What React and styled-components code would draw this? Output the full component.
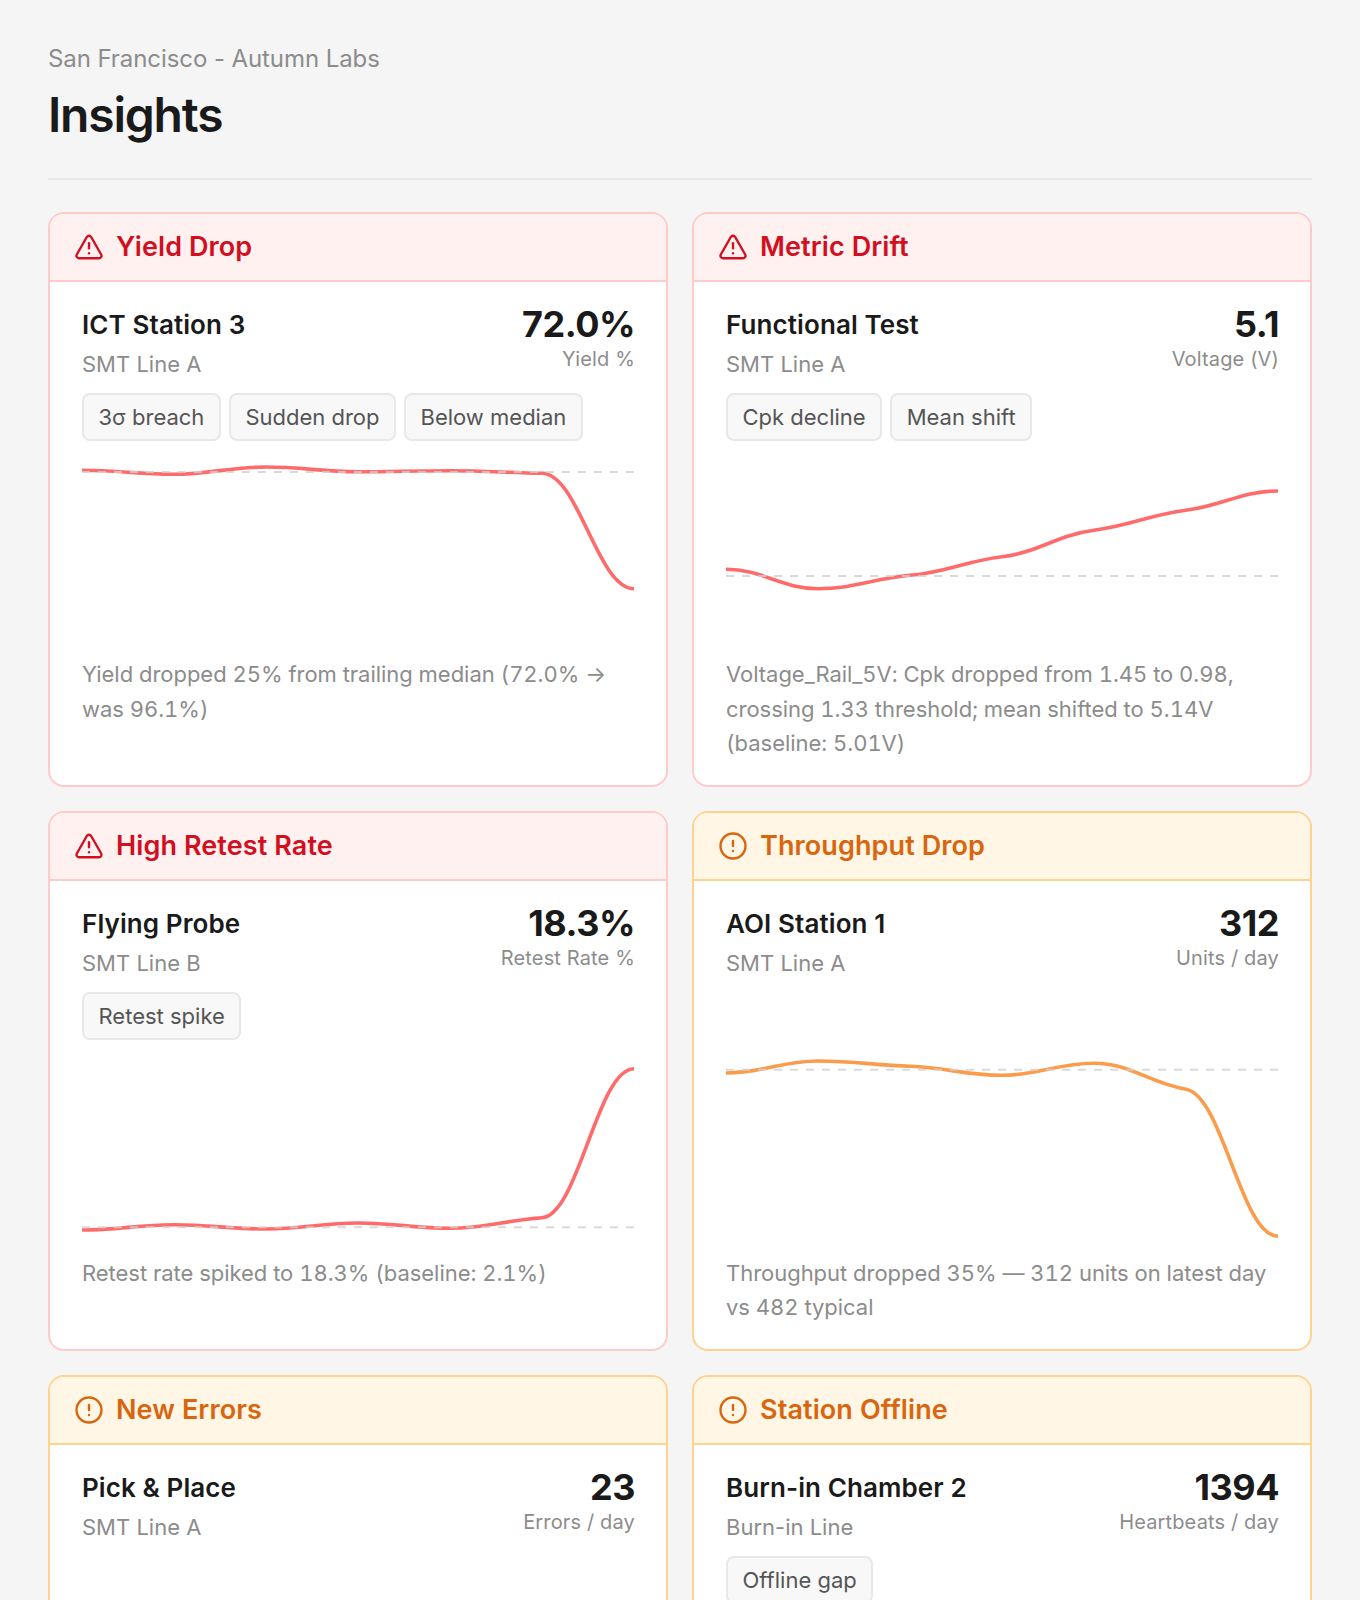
import React from 'react'
import styled, { createGlobalStyle } from 'styled-components'
import { TriangleAlert, CircleAlert } from 'lucide-react'

const GlobalStyle = createGlobalStyle`
  html, body {
    margin: 0;
    padding: 0;
    background: #f5f5f5;
  }
  * {
    box-sizing: border-box;
  }
`

const palette = {
  red: { bg: '#fff1f0', border: '#ffcaca', title: '#d10f1f', line: '#ff6b6b' },
  amber: { bg: '#fff6e5', border: '#ffd28f', title: '#d9660f', line: '#fa9c4b' }
}

const Page = styled.div`
  height: 1600px;
  overflow: hidden;
  padding: 45px 48px 0;
  background: #f5f5f5;
  font-family: Inter, "Liberation Sans", sans-serif;
`

const Header = styled.header`
  border-bottom: 2px solid #e8e8e8;
  padding-bottom: 34px;
  margin-bottom: 32px;
`

const Location = styled.div`
  font-size: 24px;
  line-height: 28px;
  letter-spacing: -0.08px;
  color: #8c8c8c;
`

const Title = styled.h1`
  margin: 13px 0 0;
  font-size: 48px;
  line-height: 58px;
  font-weight: 600;
  letter-spacing: -0.025em;
  color: #1a1a1a;
`

const Grid = styled.div`
  display: grid;
  grid-template-columns: 1fr 1fr;
  gap: 24px;
`

const Card = styled.section`
  display: flex;
  flex-direction: column;
  background: #fff;
  border: 2px solid ${p => palette[p.$tone].border};
  border-radius: 16px;
  overflow: hidden;
`

const CardHead = styled.div`
  display: flex;
  align-items: center;
  gap: 12px;
  height: 68px;
  padding: 0 24px;
  background: ${p => palette[p.$tone].bg};
  border-bottom: 2px solid ${p => palette[p.$tone].border};
  color: ${p => palette[p.$tone].title};
`

const CardTitle = styled.span`
  font-size: 27px;
  font-weight: 600;
  letter-spacing: 0.1px;
  padding-bottom: 1px;
`

const CardBody = styled.div`
  flex: 1;
  padding: 25px 32px 24px;
`

const TopRow = styled.div`
  display: flex;
  justify-content: space-between;
  align-items: flex-start;
`

const Name = styled.div`
  font-size: 26px;
  line-height: 36px;
  font-weight: 600;
  letter-spacing: 0.1px;
  color: #1a1a1a;
`

const Line = styled.div`
  margin-top: 3px;
  font-size: 22px;
  line-height: 36px;
  color: #8c8c8c;
`

const Metric = styled.div`
  margin: -1px -1px 0 0;
  text-align: right;
`

const Value = styled.div`
  font-size: 36px;
  line-height: 36px;
  font-weight: 700;
  letter-spacing: -0.5px;
  color: #1a1a1a;
`

const MetricLabel = styled.div`
  margin-top: 1px;
  font-size: 20px;
  line-height: 32px;
  letter-spacing: 0.15px;
  color: #8c8c8c;
`

const Tags = styled.div`
  display: flex;
  gap: 8px;
  min-height: 48px;
  margin-top: 11px;
`

const Tag = styled.span`
  display: flex;
  align-items: center;
  height: 48px;
  padding: 0 14.5px;
  font-size: 22px;
  color: #555;
  background: #f8f8f8;
  border: 2px solid #e8e8e8;
  border-radius: 8px;
`

const Chart = styled.svg`
  display: block;
  margin: 16px 0 10px;
`

const Note = styled.p`
  margin: 0;
  font-size: 22px;
  line-height: 34.5px;
  font-variant-numeric: tabular-nums;
  letter-spacing: -0.03px;
  color: #8c8c8c;
`

// monotone tangents damped hard, flat at both ends, so knots read almost level
function curvePath(ys, w) {
  const step = w / (ys.length - 1)
  const slopes = ys.slice(1).map((y, i) => (y - ys[i]) / step)
  const t = ys.map((_, i) => {
    if (i === 0 || i === ys.length - 1) return 0
    const a = slopes[i - 1]
    const b = slopes[i]
    if (a * b <= 0) return 0
    return 0.3 * (Math.sign(a) + Math.sign(b)) * Math.min(Math.abs(a), Math.abs(b))
  })
  const pull = step * 0.4
  let d = `M0 ${ys[0]}`
  for (let i = 1; i < ys.length; i++) {
    const x0 = (i - 1) * step
    const x1 = i * step
    d += ` C${x0 + pull} ${ys[i - 1] + t[i - 1] * pull} ${x1 - pull} ${ys[i] - t[i] * pull} ${x1} ${ys[i]}`
  }
  return d
}

const Spark = ({ tone, ys, base }) => (
  <Chart width="552" height="190" viewBox="0 0 552 190">
    <path d={curvePath(ys, 552)} fill="none" stroke={palette[tone].line} strokeWidth="3.6" />
    <line x1="0" x2="552" y1={base} y2={base} stroke="#d0d0d0" strokeOpacity="0.8" strokeWidth="2" strokeDasharray="8 8" />
  </Chart>
)

const cards = [
  {
    tone: 'red', title: 'Yield Drop', name: 'ICT Station 3', line: 'SMT Line A', value: '72.0%', label: 'Yield %',
    tags: ['3σ breach', 'Sudden drop', 'Below median'],
    ys: [13.3, 17.3, 10, 14.7, 13.7, 16.3, 131.7], base: 15,
    note: 'Yield dropped 25% from trailing median (72.0% → was 96.1%)'
  },
  {
    tone: 'red', title: 'Metric Drift', name: 'Functional Test', line: 'SMT Line A', value: '5.1', label: 'Voltage (V)',
    tags: ['Cpk decline', 'Mean shift'],
    ys: [112.3, 131.7, 118.3, 99.7, 73.3, 53.3, 34], base: 119,
    note: 'Voltage_Rail_5V: Cpk dropped from 1.45 to 0.98, crossing 1.33 threshold; mean shifted to 5.14V (baseline: 5.01V)'
  },
  {
    tone: 'red', title: 'High Retest Rate', name: 'Flying Probe', line: 'SMT Line B', value: '18.3%', label: 'Retest Rate %',
    tags: ['Retest spike'],
    ys: [174, 168.7, 173, 167, 172.3, 161.7, 12.7], base: 171.3,
    note: 'Retest rate spiked to 18.3% (baseline: 2.1%)'
  },
  {
    tone: 'amber', title: 'Throughput Drop', name: 'AOI Station 1', line: 'SMT Line A', value: '312', label: 'Units / day',
    tags: [],
    ys: [17, 5, 10.3, 19.3, 7.3, 33.3, 180.3], base: 13.7,
    note: 'Throughput dropped 35% — 312 units on latest day vs 482 typical'
  },
  {
    tone: 'amber', title: 'New Errors', name: 'Pick & Place', line: 'SMT Line A', value: '23', label: 'Errors / day',
    tags: []
  },
  {
    tone: 'amber', title: 'Station Offline', name: 'Burn-in Chamber 2', line: 'Burn-in Line', value: '1394', label: 'Heartbeats / day',
    tags: ['Offline gap']
  }
]

const Insight = ({ card }) => {
  const Icon = card.tone === 'red' ? TriangleAlert : CircleAlert
  return (
    <Card $tone={card.tone}>
      <CardHead $tone={card.tone}>
        <Icon size={30} strokeWidth={1.9} />
        <CardTitle>{card.title}</CardTitle>
      </CardHead>
      <CardBody>
        <TopRow>
          <div>
            <Name>{card.name}</Name>
            <Line>{card.line}</Line>
          </div>
          <Metric>
            <Value>{card.value}</Value>
            <MetricLabel>{card.label}</MetricLabel>
          </Metric>
        </TopRow>
        <Tags>
          {card.tags.map(tag => <Tag key={tag}>{tag}</Tag>)}
        </Tags>
        {card.ys ? <Spark tone={card.tone} ys={card.ys} base={card.base} /> : null}
        {card.note ? <Note>{card.note}</Note> : null}
      </CardBody>
    </Card>
  )
}

export default function App() {
  return (
    <Page>
      <GlobalStyle />
      <Header>
        <Location>San Francisco - Autumn Labs</Location>
        <Title>Insights</Title>
      </Header>
      <Grid>
        {cards.map(card => <Insight key={card.title} card={card} />)}
      </Grid>
    </Page>
  )
}
